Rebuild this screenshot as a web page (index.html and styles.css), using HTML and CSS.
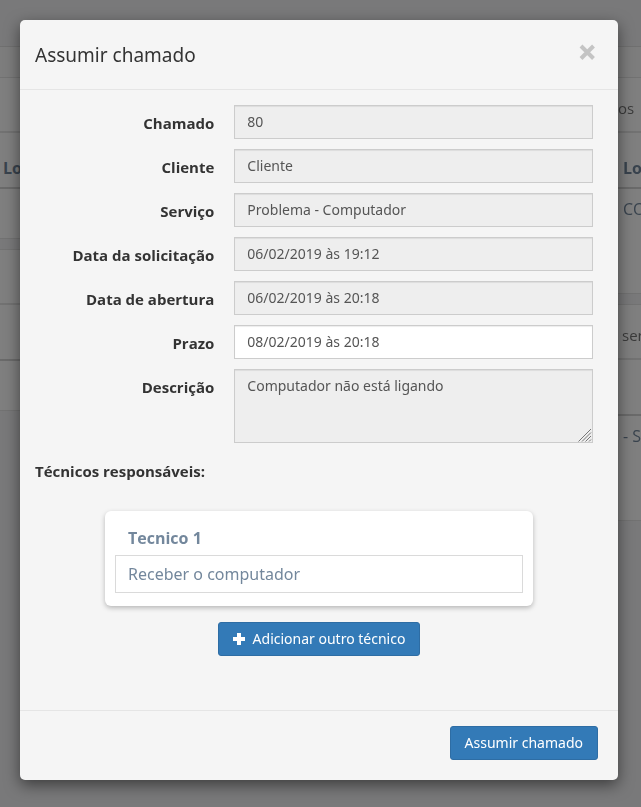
FILE: index.html
```html
<!DOCTYPE html>
<html lang="pt-BR">
<head>
<meta charset="utf-8">
<meta name="viewport" content="width=device-width, initial-scale=1">
<title>Assumir chamado</title>
<link rel="stylesheet" href="styles.css">
</head>
<body>
<div class="page" aria-hidden="true">
  <div class="topbar"></div>
  <div class="crumbs"></div>
  <div class="columns">
    <div class="column">
      <div class="panel">
        <div class="panel-title"></div>
        <div class="panel-head">Lo</div>
        <div class="panel-row"></div>
      </div>
      <div class="panel">
        <div class="panel-title"></div>
        <div class="panel-head"></div>
        <div class="panel-row"></div>
      </div>
    </div>
    <div class="column">
      <div class="panel">
        <div class="panel-title panel-title-end">os</div>
        <div class="panel-head">Lo</div>
        <div class="panel-row panel-row-tall">CO</div>
      </div>
      <div class="panel">
        <div class="panel-title">ser</div>
        <div class="panel-head"></div>
        <div class="panel-row panel-row-tall">- S</div>
      </div>
    </div>
  </div>
</div>
<div class="backdrop"></div>

<section class="modal" role="dialog" aria-labelledby="modal-title">
  <header class="modal-header">
    <h1 id="modal-title">Assumir chamado</h1>
    <button type="button" class="close" aria-label="Fechar">
      <svg width="18" height="18" viewBox="0 0 18 18"><path d="M3 3 15.500 15.500M15.500 3 3 15.500"/></svg>
    </button>
  </header>
  <form class="modal-body">
    <div class="fields">
      <label for="chamado">Chamado</label>
      <input id="chamado" class="control" type="text" value="80" readonly>
      <label for="cliente">Cliente</label>
      <input id="cliente" class="control" type="text" value="Cliente" readonly>
      <label for="servico">Serviço</label>
      <input id="servico" class="control" type="text" value="Problema - Computador" readonly>
      <label for="solicitacao">Data da solicitação</label>
      <input id="solicitacao" class="control" type="text" value="06/02/2019 às 19:12" readonly>
      <label for="abertura">Data de abertura</label>
      <input id="abertura" class="control" type="text" value="06/02/2019 às 20:18" readonly>
      <label for="prazo">Prazo</label>
      <input id="prazo" class="control" type="text" value="08/02/2019 às 20:18">
      <label for="descricao">Descrição</label>
      <div class="textarea-wrap">
        <textarea id="descricao" class="control" rows="3" readonly>Computador não está ligando</textarea>
        <svg class="grip" width="14" height="14" viewBox="0 0 14 14" aria-hidden="true"><path d="M.5 13.500 13 1M4 13.500 13 4.500M7.500 13.500 13 8M11 13.500 13 11.500"/></svg>
      </div>
    </div>
    <h2 class="section-title">Técnicos responsáveis:</h2>
    <div class="tech-card">
      <label for="tarefa">Tecnico 1</label>
      <input id="tarefa" type="text" value="Receber o computador">
    </div>
    <button type="button" class="btn btn-add">
      <svg width="12" height="12" viewBox="0 0 12 12"><path d="M4 0h4v4h4v4H8v4H4V8H0V4h4z"/></svg>
      Adicionar outro técnico
    </button>
  </form>
  <footer class="modal-footer">
    <button type="button" class="btn">Assumir chamado</button>
  </footer>
</section>
</body>
</html>
```
FILE: styles.css
```css
* {
  box-sizing: border-box;
}

body {
  margin: 0;
  min-height: 100vh;
  background: #f3f3f4;
  color: #333;
  font-family: "Noto Sans", "Open Sans", sans-serif;
  font-size: 14px;
  line-height: 20px;
}

/* Page behind the dialog */
.page {
  position: fixed;
  inset: 0;
  overflow: hidden;
}

.topbar {
  height: 47px;
  border-bottom: 1px solid #e0e0e0;
}

.crumbs {
  height: 30px;
  background: #fafafa;
}

.columns {
  display: flex;
  justify-content: space-between;
}

.column {
  width: 23px;
  white-space: nowrap;
  overflow: hidden;
}

.panel {
  margin-bottom: 10px;
  border: solid #e4e4e4;
  border-width: 1px 0;
  background: #fff;
  color: #73879c;
  font-family: "Open Sans", sans-serif;
  font-size: 16px;
}

.panel-title {
  height: 55px;
  padding: 20px 4px 0;
  border-bottom: 2px solid #e4e4e4;
  color: #777;
  font-size: 15px;
}

.panel-title-end {
  padding-left: 0;
}

.panel-head {
  height: 56px;
  padding: 25px 3px 0;
  border-bottom: 2px solid #d4d4d4;
  font-weight: 700;
}

.column:last-child .panel-head,
.panel-row {
  padding-left: 5px;
}

.panel-row {
  height: 49px;
  padding-top: 10px;
}

.panel-row-tall {
  height: 104px;
}

.backdrop {
  position: fixed;
  inset: 0;
  background: rgba(0, 0, 0, 0.5);
}

/* Dialog */
.modal {
  position: relative;
  margin: 20px 23px 27px 20px;
  border-radius: 5px;
  background: #f5f5f5;
  box-shadow: 0 5px 15px rgba(0, 0, 0, 0.5);
}

.modal-header {
  display: flex;
  justify-content: space-between;
  align-items: flex-start;
  padding: 20px 22px 19px 15px;
  border-bottom: 1px solid #e5e5e5;
}

h1 {
  margin: 0;
  font-size: 19px;
  line-height: 30px;
  font-weight: 400;
}

.close {
  display: flex;
  padding: 3px 0;
  border: 0;
  background: none;
}

.close path {
  fill: none;
  stroke: #c4c4c4;
  stroke-width: 4;
}

.modal-body {
  display: flex;
  flex-direction: column;
  padding: 15px 15px 54px;
}

.fields {
  display: grid;
  grid-template-columns: 1fr 2fr;
  gap: 10px 20px;
  padding-right: 10px;
}

.fields label {
  padding-top: 8px;
  text-align: right;
  font-family: "Open Sans", sans-serif;
  font-size: 15px;
  font-weight: 700;
}

.control {
  display: block;
  width: 100%;
  height: 34px;
  padding: 5px 12px 7px;
  border: 1px solid #ccc;
  border-radius: 0;
  background: #fff;
  box-shadow: inset 0 1px 1px rgba(0, 0, 0, 0.075);
  color: #555;
  font: inherit;
}

.control:read-only {
  background: #eee;
}

.textarea-wrap {
  position: relative;
}

textarea.control {
  height: 74px;
  padding-top: 6px;
  resize: none;
}

.grip {
  position: absolute;
  right: 1px;
  bottom: 1px;
  fill: none;
  stroke: #777;
}

.section-title {
  margin: 18px 0 30px;
  font-family: "Open Sans", sans-serif;
  font-size: 15px;
  line-height: 20px;
  font-weight: 700;
}

.tech-card {
  margin: 0 70px 16px;
  padding: 17px 10px 13px;
  border-radius: 6px;
  background: #fff;
  box-shadow: 0 2px 5px rgba(0, 0, 0, 0.25);
  color: #73879c;
  font-size: 16px;
}

.tech-card label {
  display: block;
  margin-bottom: 7px;
  padding-left: 13px;
  font-family: "Open Sans", sans-serif;
  font-weight: 700;
}

.tech-card input {
  display: block;
  width: 100%;
  height: 38px;
  padding: 0 12px;
  border: 1px solid #dadada;
  background: #fff;
  color: inherit;
  font: inherit;
}

.btn {
  display: flex;
  align-items: center;
  gap: 8px;
  height: 34px;
  padding: 6px 14px;
  border: 1px solid #2e6da4;
  border-radius: 3px;
  background: #337ab7;
  color: #fff;
  font: inherit;
}

.btn svg {
  fill: #fff;
}

.btn-add {
  align-self: center;
}

.modal-footer {
  display: flex;
  justify-content: flex-end;
  padding: 15px 20px 20px;
  border-top: 1px solid #e5e5e5;
}
```
